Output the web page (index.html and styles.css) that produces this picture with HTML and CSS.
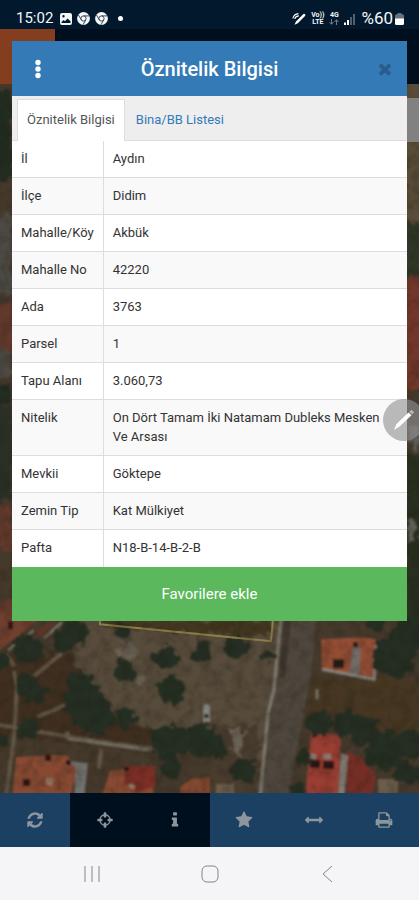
FILE: index.html
```html
<!DOCTYPE html>
<html lang="tr">
<head>
<meta charset="utf-8">
<meta name="viewport" content="width=device-width, initial-scale=1">
<title>Öznitelik Bilgisi</title>
<link rel="stylesheet" href="styles.css">
</head>
<body>
<div class="screen">
  <header class="status">
    <span class="status-time">15:02</span>
    <svg width="12" height="12" viewBox="0 0 12 12" aria-hidden="true"><path fill="#f4f6f8" fill-rule="evenodd" d="M2 0h8a2 2 0 0 1 2 2v8a2 2 0 0 1-2 2H2a2 2 0 0 1-2-2V2a2 2 0 0 1 2-2zM1.500 10h9V8.300L7.500 5.600 5 8.300 3.700 7 1.500 9zM2.300 3.200a1.200 1.200 0 1 0 2.400 0 1.200 1.200 0 0 0-2.400 0z"/></svg>
    <svg width="13" height="13" viewBox="0 0 13 13" aria-hidden="true"><circle cx="6.500" cy="6.500" r="6.400" fill="#f4f6f8"/><g fill="none" stroke="#26384a" stroke-width=".9"><circle cx="6.500" cy="6.500" r="2.600"/><path d="M6.500 3.900H12M8.700 7.800 6 12.800M4.300 7.800 1.500 3"/></g></svg>
    <svg width="13" height="13" viewBox="0 0 13 13" aria-hidden="true"><circle cx="6.500" cy="6.500" r="6.400" fill="#f4f6f8"/><g fill="none" stroke="#26384a" stroke-width=".9"><circle cx="6.500" cy="6.500" r="2.600"/><path d="M6.500 3.900H12M8.700 7.800 6 12.800M4.300 7.800 1.500 3"/></g></svg>
    <span class="status-dot"></span>
    <span class="status-gap"></span>
    <svg width="14" height="14" viewBox="0 0 14 14" aria-hidden="true"><path d="M2.500 12.800 4 9.400 11.200 2.200a1.200 1.200 0 0 1 1.800 1.800L5.800 11.200z" fill="#fff"/><path d="M.9 6.500C1.500 3.500 3.500 1.800 6.500 1.600M2.800 7C3.200 5.200 4.600 4 6.800 3.900" fill="none" stroke="#fff" stroke-width="1.100"/></svg>
    <span class="status-net"><span>Vo))</span><span>LTE</span></span>
    <span class="status-net"><span>4G</span>
      <svg width="10" height="6" viewBox="0 0 10 6" aria-hidden="true"><path d="M2.500 0v5M.5 3l2 2.300 2-2.300M7.500 6V1M5.500 3l2-2.300 2 2.300" fill="none" stroke="#7d8893" stroke-width=".9"/></svg>
    </span>
    <svg width="12" height="12" viewBox="0 0 12 12" aria-hidden="true"><path fill="#fff" d="M0 9.500h2V12H0zM3 7h2v5H3z"/><path fill="#53606c" d="M6 4h2v8H6zM9 1h2v11H9z"/></svg>
    <span class="status-battery">%60<svg width="9" height="12" viewBox="0 0 9 12" aria-hidden="true"><path fill="#66717b" d="M2.500 0h4v1.200h1A1.500 1.500 0 0 1 9 2.700V6H0V2.700a1.500 1.500 0 0 1 1.500-1.500h1z"/><path fill="#fff" d="M0 5.500h9v5A1.500 1.500 0 0 1 7.500 12h-6A1.500 1.500 0 0 1 0 10.500z"/></svg></span>
  </header>

  <main class="app">
    <svg class="map" viewBox="0 84 419 710" preserveAspectRatio="none" aria-hidden="true">
      <defs>
        <filter id="rough" x="-10%" y="-10%" width="120%" height="120%" color-interpolation-filters="sRGB">
          <feTurbulence type="fractalNoise" baseFrequency=".11" numOctaves="3" seed="4" result="n"/>
          <feDisplacementMap in="SourceGraphic" in2="n" scale="16" xChannelSelector="R" yChannelSelector="G" result="d"/>
          <feGaussianBlur in="d" stdDeviation="1"/>
        </filter>
        <filter id="soft"><feGaussianBlur stdDeviation=".8"/></filter>
        <filter id="grain" x="0" y="0" width="100%" height="100%" color-interpolation-filters="sRGB">
          <feTurbulence type="fractalNoise" baseFrequency=".09" numOctaves="3" seed="9"/>
          <feColorMatrix values="0 0 0 0 .1  0 0 0 0 .1  0 0 0 0 .06  1.800 0 0 0 -.7"/>
        </filter>
      </defs>
      <rect y="84" width="419" height="710" fill="#45392b"/>
      <!-- side strips -->
      <g filter="url(#rough)">
        <path fill="#222c20" d="M-9 90h21v90H-9zM-9 385h21v18H-9z"/>
        <path fill="#4d4a45" d="M-9 215h21v80H-9zM-9 350h21v28H-9z"/>
        <path fill="#63392c" d="M-9 305h21v45H-9zM-9 505h21v45H-9zM-9 600h23v40H-9z"/>
        <path fill="#2b3026" d="M-9 405h21v95H-9z"/>
        <path fill="#5a4c38" d="M405 84h24v136h-24z"/>
        <path fill="#303726" d="M405 222h24v55h-24z"/>
        <path fill="#733729" d="M405 280h24v110h-24z"/>
        <path fill="#29301f" d="M405 455h24v170h-24z"/>
        <path fill="#5f5d57" d="M410 425h9v26h-9zM408 520h8v22h-8z"/>
      </g>
      <!-- open ground -->
      <g filter="url(#rough)">
        <path fill="#574b3b" d="M80 615h198v60l-8 125-60-70-40 8-45-18-30-25-20-30z"/>
        <path fill="#43371f" d="M100 620h170v18L100 628z"/>
        <path fill="#402f20" d="M-9 655l79 0 30 60 60 20-20 15L-9 735z"/>
        <path fill="#473722" d="M315 680h114v60l-120-25z"/>
        <path fill="#4a3d2f" d="M210 725h50v79h-50z"/>
        <path fill="#6a6054" d="M114 648l20-4 4 12-20 6zM138 674l8 2-3 13-7-3zM230 728l16 4-6 26-6-6z"/>
      </g>
      <!-- road and paths -->
      <g filter="url(#soft)">
        <path fill="#50473c" d="M281 612h36l-6 64-24 124h-30z"/>
        <path fill="#40382e" d="M285 612h7l-7 66-6 0z"/>
        <path fill="none" stroke="#7f7a6f" stroke-width="3" d="M281 616l-7 74-6 24-8 84"/>
        <path fill="none" stroke="#625645" stroke-width="4" d="M14 667l-8-12M30 680l32-26M37 718l28-12M-5 725l75 13 82 12M14 672l3 16-3 50-8 60M67 732l2 10M101 750l-2 20"/>
        <path fill="none" stroke="#756f65" stroke-width="3" d="M70 740l78 11M8 651l26-20M44 639l18-16M317 690l0 10"/>
      </g>
      <!-- houses -->
      <g filter="url(#soft)">
        <path fill="#70402e" d="M-5 612h51l-22 22-29 20z"/>
        <path fill="#5c3427" d="M34 632l26-14-18 20z"/>
        <path fill="#874a31" d="M16 758l50-2 12 12-8 32H12zM110 772l36-6 10 34h-55zM180 788l12-8 18-2v22h-30z"/>
        <path fill="#7b2d26" d="M126 767h28l2 20-20 7-12-10z"/>
        <path fill="#6f706d" d="M68 762l20 2-4 36h-10l2-31z"/>
        <path fill="#944e34" d="M321 640l43-2 12 2v38l-54-8z"/>
        <path fill="none" stroke="#8a837a" stroke-width="3" d="M322 670l52 10 3-34"/>
        <path fill="#716c65" d="M353 648h8l-2 28-10-2z"/>
        <path fill="#241a17" d="M333 660h11v9h-11zM353 643h5v5h-5z"/>
        <path fill="#9a3e31" d="M311 733l30 3-3 64h-33z"/>
        <path fill="#752f28" d="M346 752l14 6 16 18-4 24h-25z"/>
        <path fill="#827a72" d="M341 754l7 3-4 43h-6zM309 755h7v5h-7zM323 755h8v5h-8z"/>
        <path fill="#2a1612" d="M310 761h10v8h-10zM323 762h11v8h-11zM23 780h7v7h-7zM45 756h6v6h-6zM66 761h5v5h-5zM124 768h5v4h-5zM8 622h5v8H8z"/>
        <path fill="#98765f" d="M46 778l8 2-2 7-6-2zM130 784l6 3-2 4-6-3z"/>
        <path fill="#6c5c4a" d="M378 780h20v20h-20zM380 749l16 3-1 4-16-3zM216 785h18v15h-18z"/>
        <rect x="203" y="705" width="7" height="19" rx="3" fill="#8b8a84"/>
        <path fill="#282d2e" d="M204 715h5v4h-5z"/>
      </g>
      <!-- tree crowns -->
      <g filter="url(#rough)" fill="#252e22">
        <circle cx="72" cy="634" r="13"/><circle cx="64" cy="641" r="12"/>
        <circle cx="27" cy="650" r="15"/><circle cx="28" cy="688" r="13"/><circle cx="38" cy="694" r="9"/>
        <circle cx="79" cy="684" r="13"/><circle cx="83" cy="702" r="20"/><circle cx="93" cy="716" r="20"/>
        <circle cx="126" cy="718" r="10"/><circle cx="124" cy="671" r="11"/>
        <circle cx="165" cy="659" r="12"/><circle cx="172" cy="692" r="14"/>
        <circle cx="203" cy="652" r="11"/><circle cx="168" cy="744" r="18"/><circle cx="202" cy="742" r="17"/>
        <circle cx="28" cy="730" r="11"/><circle cx="2" cy="742" r="8"/><circle cx="2" cy="662" r="7"/>
        <circle cx="122" cy="633" r="8"/><circle cx="236" cy="648" r="12"/><circle cx="170" cy="772" r="10"/>
        <circle cx="395" cy="656" r="22"/><circle cx="409" cy="634" r="16"/><circle cx="376" cy="625" r="9"/>
        <circle cx="318" cy="724" r="13"/><circle cx="345" cy="724" r="13"/><circle cx="363" cy="731" r="15"/>
        <circle cx="386" cy="752" r="20"/><circle cx="409" cy="744" r="15"/><circle cx="303" cy="759" r="8"/>
        <circle cx="408" cy="775" r="12"/><circle cx="244" cy="771" r="13"/><circle cx="220" cy="752" r="8"/>
        <circle cx="268" cy="657" r="6"/><circle cx="296" cy="792" r="7"/>
      </g>
      <path fill="none" stroke="#8d7f49" stroke-width="2" d="M100 622v3l171 17 2-22"/>
      <rect y="84" width="419" height="710" filter="url(#grain)" opacity=".3"/>
    </svg>
    <div class="app-header"><div class="app-logo"></div></div>
    <div class="side-handle"></div>

    <section class="dialog" aria-labelledby="dialog-title">
      <div class="dialog-head">
        <button class="head-button" aria-label="Menü"><svg width="6" height="20" viewBox="0 0 6 20"><g fill="#fff"><circle cx="3" cy="3.500" r="2.700"/><circle cx="3" cy="10" r="2.700"/><circle cx="3" cy="16.500" r="2.700"/></g></svg></button>
        <h1 class="dialog-title" id="dialog-title">Öznitelik Bilgisi</h1>
        <button class="head-button" aria-label="Kapat"><svg width="18" height="18" viewBox="0 0 1792 1792"><path fill="#285d8d" d="M1490 1322q0 40-28 68l-136 136q-28 28-68 28t-68-28l-294-294-294 294q-28 28-68 28t-68-28l-136-136q-28-28-28-68t28-68l294-294-294-294q-28-28-28-68t28-68l136-136q28-28 68-28t68 28l294 294 294-294q28-28 68-28t68 28l136 136q28 28 28 68t-28 68l-294 294 294 294q28 28 28 68z"/></svg></button>
      </div>
      <nav class="tabs">
        <a class="tab tab-active" href="#oznitelik">Öznitelik Bilgisi</a>
        <a class="tab" href="#bina">Bina/BB Listesi</a>
      </nav>
      <table class="attributes" id="oznitelik">
        <tbody>
          <tr><th scope="row">İl</th><td>Aydın</td></tr>
          <tr><th scope="row">İlçe</th><td>Didim</td></tr>
          <tr><th scope="row">Mahalle/Köy</th><td>Akbük</td></tr>
          <tr><th scope="row">Mahalle No</th><td>42220</td></tr>
          <tr><th scope="row">Ada</th><td>3763</td></tr>
          <tr><th scope="row">Parsel</th><td>1</td></tr>
          <tr><th scope="row">Tapu Alanı</th><td>3.060,73</td></tr>
          <tr><th scope="row">Nitelik</th><td>On Dört Tamam İki Natamam Dubleks Mesken Ve Arsası</td></tr>
          <tr><th scope="row">Mevkii</th><td>Göktepe</td></tr>
          <tr><th scope="row">Zemin Tip</th><td>Kat Mülkiyet</td></tr>
          <tr><th scope="row">Pafta</th><td>N18-B-14-B-2-B</td></tr>
        </tbody>
      </table>
      <button class="favorite">Favorilere ekle</button>
    </section>

    <button class="pen" aria-label="Kalem"><svg width="24" height="24" viewBox="0 0 24 24"><path fill="#fff" d="M2 22l2.500-6L16.500 4.500l3 2.800L7.500 18.500z"/><path fill="#b9b9b9" d="M17.300 3.700l2-2 2.800 2.600-1.900 2.200z"/></svg></button>
  </main>

  <nav class="toolbar">
    <button class="tool" aria-label="Yenile"><svg class="icon" viewBox="0 0 1792 1792"><path d="M1639 1056q0 5-1 7-64 268-268 434.500t-478 166.500q-146 0-282.500-55t-243.500-157l-129 129q-19 19-45 19t-45-19-19-45v-448q0-26 19-45t45-19h448q26 0 45 19t19 45-19 45l-137 137q71 66 161 102t187 36q134 0 250-65t186-179q11-17 53-117 8-23 30-23h192q13 0 22.500 9.500t9.500 22.500zm25-800v448q0 26-19 45t-45 19h-448q-26 0-45-19t-19-45 19-45l138-138q-148-137-349-137-134 0-250 65t-186 179q-11 17-53 117-8 23-30 23h-199q-13 0-22.500-9.500t-9.500-22.500v-7q65-268 270-434.500t480-166.500q146 0 284 55.500t245 156.500l130-129q19-19 45-19t45 19 19 45z"/></svg></button>
    <button class="tool tool-on" aria-label="Konum"><svg class="icon" viewBox="0 0 1792 1792"><path d="M1325 1024h-109q-26 0-45-19t-19-45v-128q0-26 19-45t45-19h109q-32-108-112.500-188.500t-188.500-112.500v109q0 26-19 45t-45 19h-128q-26 0-45-19t-19-45v-109q-108 32-188.500 112.500t-112.500 188.500h109q26 0 45 19t19 45v128q0 26-19 45t-45 19h-109q32 108 112.500 188.500t188.500 112.500v-109q0-26 19-45t45-19h128q26 0 45 19t19 45v109q108-32 188.500-112.500t112.500-188.500zm339-192v128q0 26-19 45t-45 19h-143q-37 161-154.500 278.500t-278.500 154.500v143q0 26-19 45t-45 19h-128q-26 0-45-19t-19-45v-143q-161-37-278.500-154.500t-154.500-278.500h-143q-26 0-45-19t-19-45v-128q0-26 19-45t45-19h143q37-161 154.500-278.500t278.500-154.500v-143q0-26 19-45t45-19h128q26 0 45 19t19 45v143q161 37 278.500 154.500t154.500 278.500h143q26 0 45 19t19 45z"/></svg></button>
    <button class="tool tool-on" aria-label="Bilgi"><svg class="icon" viewBox="0 0 1792 1792"><path d="M1216 1344v128q0 26-19 45t-45 19h-512q-26 0-45-19t-19-45v-128q0-26 19-45t45-19h64v-384h-64q-26 0-45-19t-19-45v-128q0-26 19-45t45-19h384q26 0 45 19t19 45v576h64q26 0 45 19t19 45zm-128-1152v192q0 26-19 45t-45 19h-256q-26 0-45-19t-19-45v-192q0-26 19-45t45-19h256q26 0 45 19t19 45z"/></svg></button>
    <button class="tool" aria-label="Favoriler"><svg class="icon" viewBox="0 0 1792 1792"><path d="M1728 647q0 22-26 48l-363 354 86 500q1 7 1 20 0 21-10.500 35.500t-30.500 14.500q-19 0-40-12l-449-236-449 236q-22 12-40 12-21 0-31.500-14.500t-10.500-35.500q0-6 2-20l86-500-364-354q-25-27-25-48 0-37 56-46l502-73 225-455q19-41 49-41t49 41l225 455 502 73q56 9 56 46z"/></svg></button>
    <button class="tool" aria-label="Ölçüm"><svg class="icon" viewBox="0 0 1792 1792"><path d="M1792 896q0 26-19 45l-256 256q-19 19-45 19t-45-19-19-45v-128h-1024v128q0 26-19 45t-45 19-45-19l-256-256q-19-19-19-45t19-45l256-256q19-19 45-19t45 19 19 45v128h1024v-128q0-26 19-45t45-19 45 19l256 256q19 19 19 45z"/></svg></button>
    <button class="tool" aria-label="Yazdır"><svg class="icon" viewBox="0 0 1792 1792"><path d="M448 1536h896v-256h-896v256zm0-640h896v-384h-160q-40 0-68-28t-28-68v-160h-640v640zm1152 64q0-26-19-45t-45-19-45 19-19 45 19 45 45 19 45-19 19-45zm128 0v416q0 13-9.500 22.500t-22.500 9.500h-224v160q0 40-28 68t-68 28h-960q-40 0-68-28t-28-68v-160h-224q-13 0-22.500-9.500t-9.500-22.500v-416q0-79 56.500-135.500t135.500-56.500h64v-544q0-40 28-68t68-28h672q40 0 88 20t76 48l152 152q28 28 48 76t20 88v256h64q79 0 135.500 56.500t56.500 135.500z"/></svg></button>
  </nav>

  <footer class="system-nav">
    <button aria-label="Son uygulamalar"><svg width="18" height="18" viewBox="0 0 18 18"><path d="M2 1v16M9 1v16M16 1v16"/></svg></button>
    <button aria-label="Ana ekran"><svg width="18" height="18" viewBox="0 0 18 18"><rect x="1" y="1" width="16" height="16" rx="5"/></svg></button>
    <button aria-label="Geri"><svg width="18" height="18" viewBox="0 0 18 18"><path d="M13 1 4 9l9 8"/></svg></button>
  </footer>
</div>
</body>
</html>
```
FILE: styles.css
```css
* { box-sizing: border-box; }

body {
  margin: 0;
  font-family: Roboto, "Liberation Sans", sans-serif;
  font-size: 13px;
  line-height: 19px;
  color: #333;
}

button {
  margin: 0;
  padding: 0;
  border: 0;
  background: none;
  font: inherit;
  color: inherit;
}

svg { display: block; }

.screen {
  display: flex;
  flex-direction: column;
  min-height: 100vh;
}

/* status bar */
.status {
  display: flex;
  align-items: center;
  gap: 5px;
  height: 29px;
  padding: 8px 15px 0 16px;
  background: #02192d;
  color: #f4f6f8;
  font-size: 15px;
}
.status-time { margin-right: 2px; }
.status-dot {
  width: 5px;
  height: 5px;
  margin-left: 5px;
  border-radius: 50%;
  background: #fff;
}
.status-gap { flex: 1; }
.status-net {
  display: flex;
  flex-direction: column;
  align-items: center;
  font-size: 7px;
  font-weight: 700;
  line-height: 7px;
}
.status-battery {
  display: flex;
  align-items: center;
  gap: 2px;
  font-size: 17px;
}

/* map area */
.app {
  position: relative;
  flex: 1;
  padding: 12px 12px 171px;
  overflow: hidden;
  background: #000b17;
}
.map {
  position: absolute;
  top: 55px;
  left: 0;
  width: 100%;
  height: calc(100% - 55px);
}
.app-header {
  position: absolute;
  top: 0;
  left: 0;
  width: 100%;
  height: 55px;
  background: #000e1e;
}
.app-logo {
  width: 55px;
  height: 100%;
  background: #843d1e;
}
.side-handle {
  position: absolute;
  top: 69px;
  right: 0;
  width: 20px;
  height: 44px;
  background: #818181;
}

/* dialog */
.dialog {
  position: relative;
  background: #fff;
}
.dialog-head {
  display: flex;
  align-items: center;
  height: 55px;
  padding: 0 8px 0 12px;
  background: #337ab7;
  color: #fff;
}
.head-button {
  display: grid;
  place-items: center;
  width: 28px;
  height: 40px;
}
.dialog-title {
  flex: 1;
  margin: 0;
  padding-right: 4px;
  font-size: 20px;
  font-weight: 500;
  line-height: 24px;
  text-align: center;
}
.tabs {
  display: flex;
  height: 45px;
  padding: 3px 5px 0;
  background: #eee;
  border-bottom: 1px solid #ddd;
}
.tab {
  height: 42px;
  padding: 10px 9px;
  border: 1px solid transparent;
  border-bottom: 0;
  color: #337ab7;
  text-decoration: none;
  margin-right: 1px;
}
.tab-active {
  border-color: #ddd;
  background: #fff;
  color: #555;
}

.attributes {
  width: 100%;
  border-collapse: collapse;
}
.attributes tr { border-bottom: 1px solid #ddd; }
.attributes tr:last-child { border-bottom-color: #fff; }
.attributes tr:nth-child(even) { background: #f9f9f9; }
.attributes th,
.attributes td {
  padding: 8px 9px 9px;
  font-weight: 400;
  text-align: left;
  vertical-align: top;
}
.attributes th {
  width: 91px;
  border-right: 1px solid #ddd;
  white-space: nowrap;
}
.attributes td { padding-right: 20px; }
.favorite {
  display: block;
  width: 100%;
  height: 54px;
  background: #5cb85c;
  color: #fff;
  font-size: 15px;
}

.pen {
  position: absolute;
  top: 370px;
  right: -6px;
  display: grid;
  place-items: center;
  width: 42px;
  height: 42px;
  border-radius: 50%;
  background: rgba(145, 145, 145, .62);
}

/* bottom bars */
.toolbar {
  display: grid;
  grid-template-columns: repeat(6, 1fr);
  height: 54px;
  background: #1b4061;
}
.tool {
  display: grid;
  place-items: center;
}
.tool-on { background: #000f1d; }
.icon {
  width: 18px;
  height: 18px;
  fill: #8d969e;
}
.system-nav {
  display: flex;
  justify-content: center;
  gap: 100px;
  height: 53px;
  background: #f5f5f8;
}
.system-nav svg {
  fill: none;
  stroke: #85858a;
  stroke-width: 1;
}
```
